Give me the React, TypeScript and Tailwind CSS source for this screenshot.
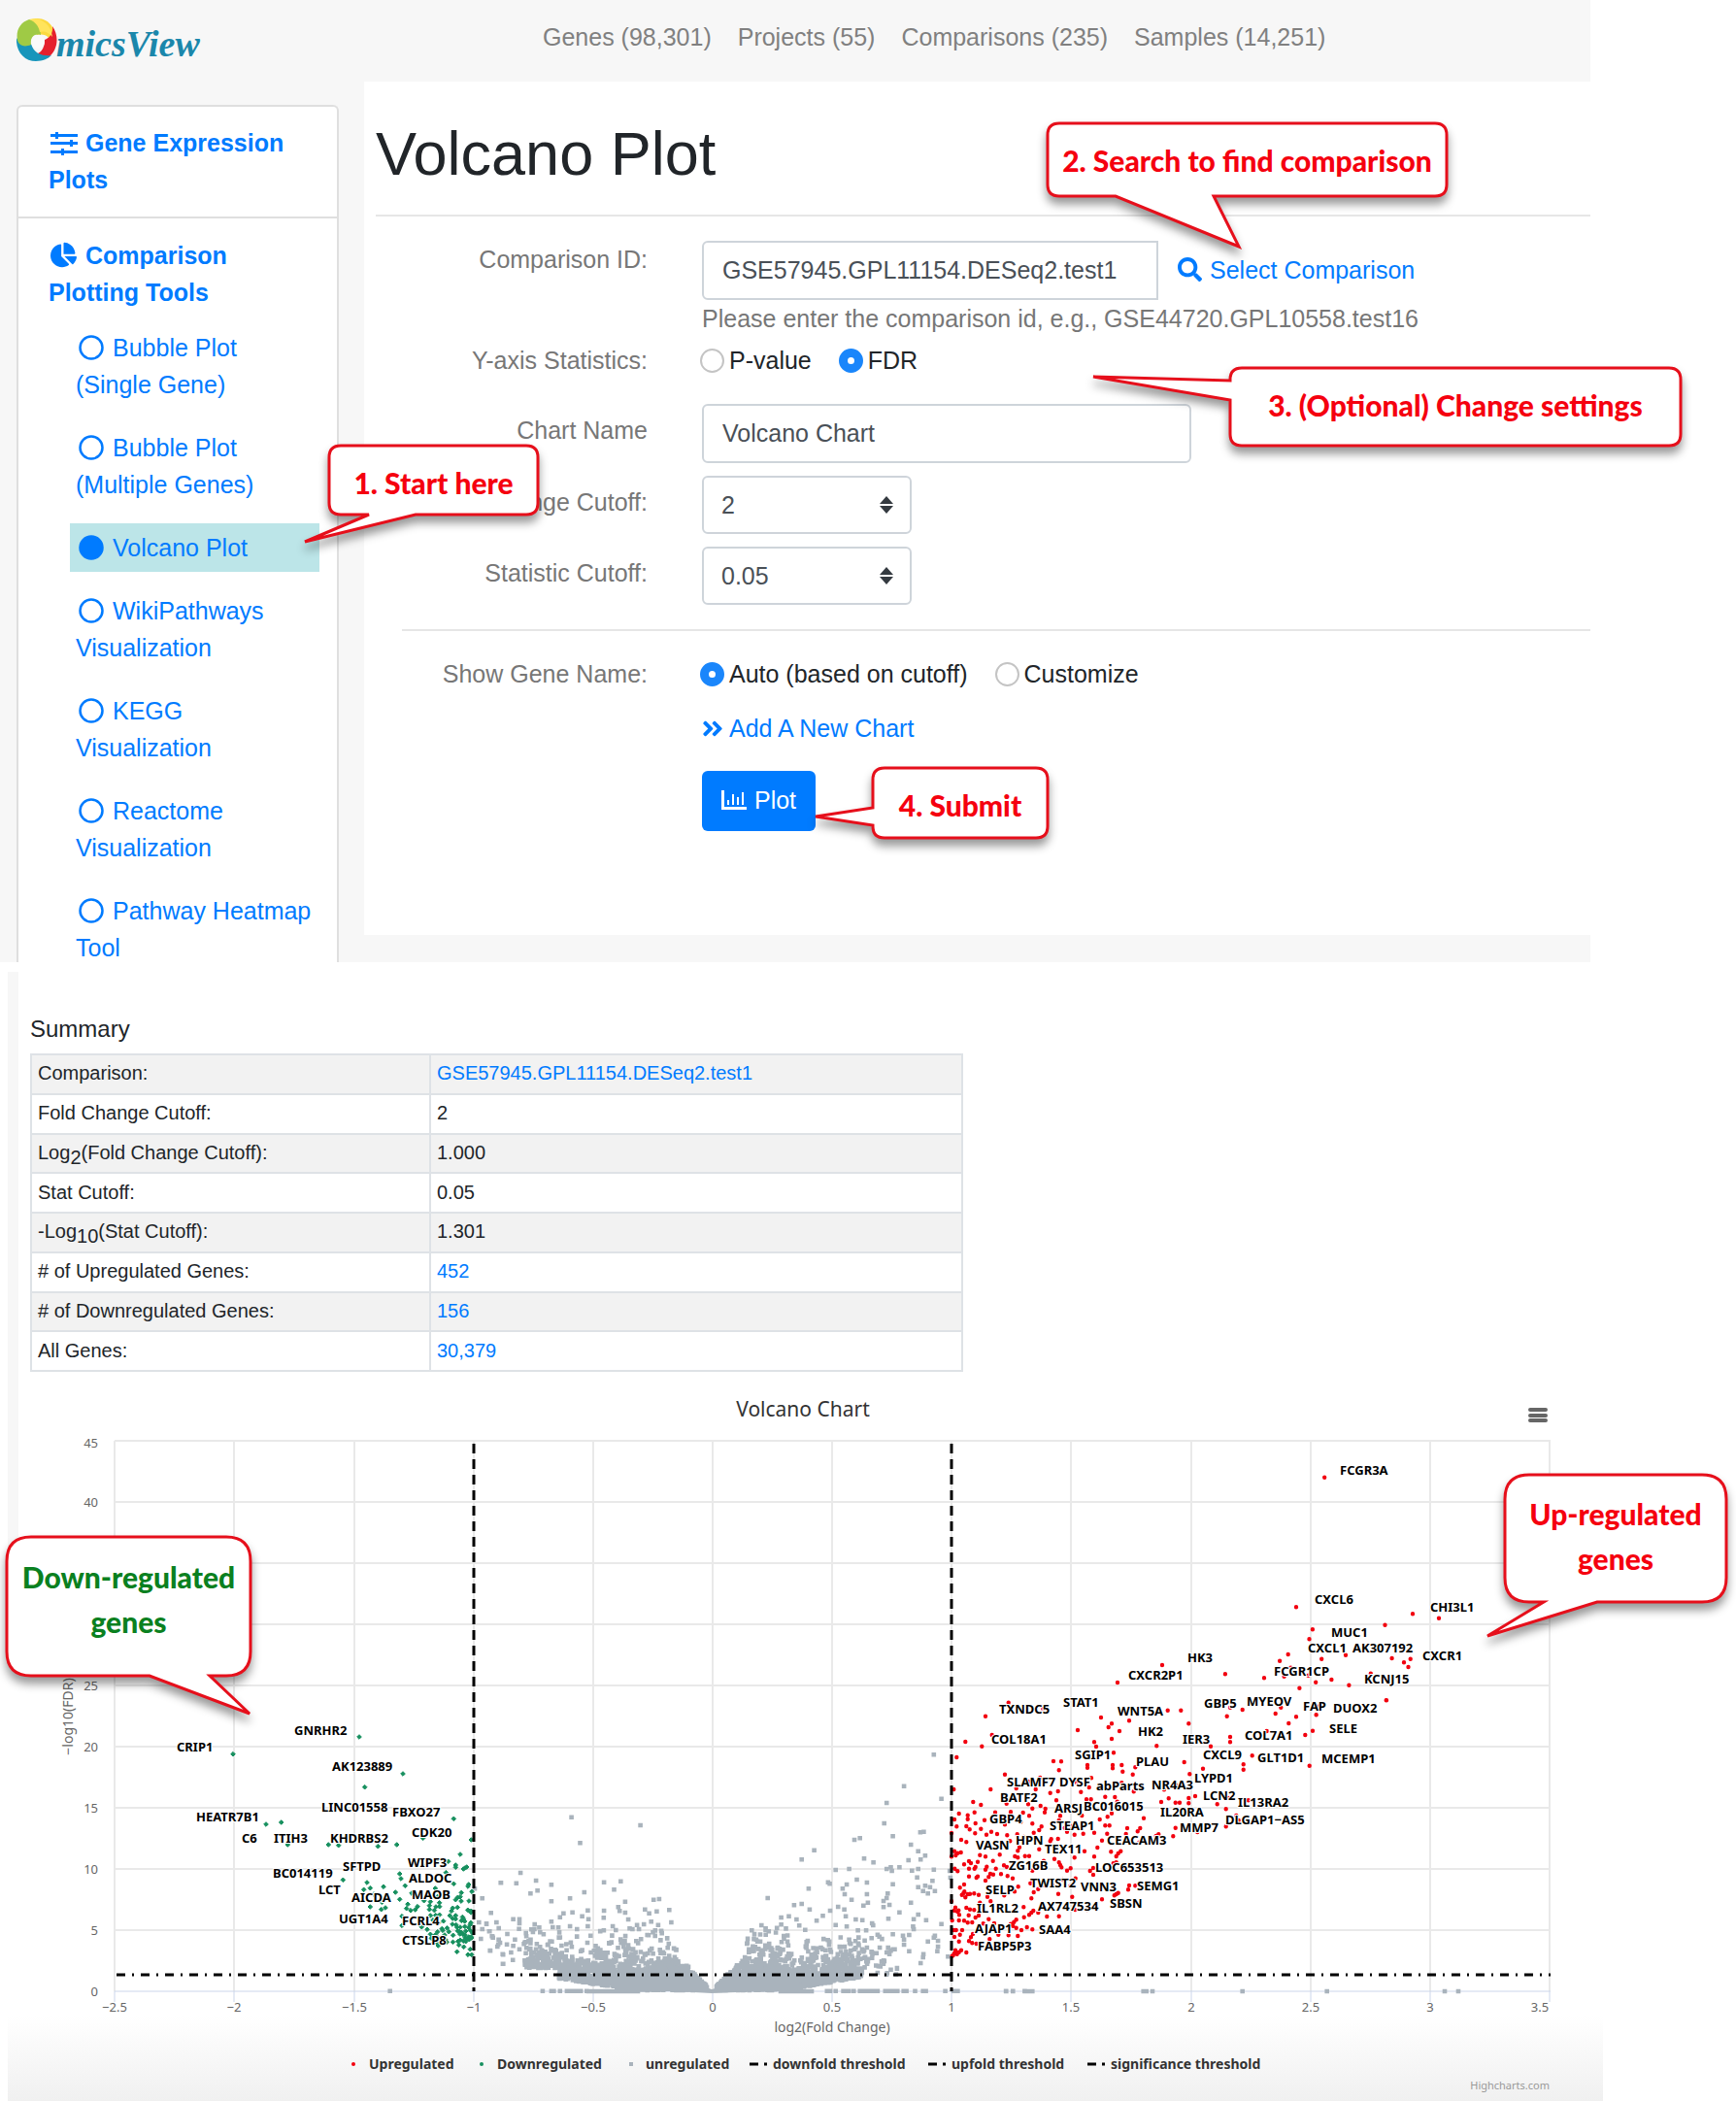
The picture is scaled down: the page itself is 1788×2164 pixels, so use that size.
import React from "react";
import { FaChartPie, FaSearch, FaAngleDoubleRight } from "react-icons/fa";

/* ------------------------------------------------------------------ */
/* Shared bits                                                         */
/* ------------------------------------------------------------------ */

function Logo() {
  return (
    <a href="#home" aria-label="OmicsView" className="flex h-11 items-end text-[#1b87ab]">
      <svg viewBox="0 0 42 44" className="h-11 w-[42px]" aria-hidden="true">
        <path d="M7 7C14 -2 30 -3 37 9C40 14 41 18 41 22L36 28C36 20 30 15 21 17C20 9 14 6 7 7Z" fill="#fbd940" />
        <path d="M37 8C44 18 43 32 33 40C28 43 20 42 15 37C24 38 29 32 29 22C34 20 38 15 37 8Z" fill="#e5202d" />
        <path d="M0 20C-1 34 8 44 20 44C27 44 33 41 36 38C28 39 18 37 15 26C8 28 3 26 0 20Z" fill="#1795bb" />
        <path d="M1 23C-1 12 4 4 13 1C20 2 25 8 25 17C18 15 14 20 15 27C8 30 3 28 1 23Z" fill="#9fca45" />
        <path d="M13 1C23 -2 35 4 37 19C32 13 27 13 24 14C23 8 19 3 13 1Z" fill="#ffe45c" />
        <circle cx="22" cy="24" r="7" fill="#fafafa" />
      </svg>
      <span className="-mb-1 -ml-px font-['Liberation_Serif',serif] text-[38px] leading-[44px] font-bold italic">
        micsView
      </span>
    </a>
  );
}

function SlidersIcon() {
  return (
    <svg viewBox="0 0 28 24" className="h-6 w-7" fill="#007bff" aria-hidden="true">
      <path d="M0 2h28v3H0zM0 10h28v3H0zM0 19h28v3H0z" />
      <path d="M5 0h3v7H5zM20 8h3v7h-3zM11 17h3v7h-3z" />
    </svg>
  );
}

function CircleIcon({ filled }: { filled?: boolean }) {
  return (
    <svg viewBox="0 0 26 26" className="h-[26px] w-[26px]" aria-hidden="true">
      <circle cx="13" cy="13" r="11.5" fill={filled ? "#007bff" : "none"} stroke="#007bff" strokeWidth="2.5" />
    </svg>
  );
}

function BarsIcon() {
  return (
    <svg viewBox="0 0 26 20" className="h-5 w-[26px]" fill="#fff" aria-hidden="true">
      <path d="M0 0h3v17h23v3H0z" />
      <path d="M6 10h2v5H6zM11 4h2v11h-2zM16 7h2v8h-2zM21 2h2v13h-2z" />
    </svg>
  );
}

function IconSlot({ children }: { children: React.ReactNode }) {
  return (
    <span className="mr-[7px] inline-flex h-[26px] w-[31px] items-center justify-center align-[-4px]">{children}</span>
  );
}

/* ------------------------------------------------------------------ */
/* Sidebar                                                             */
/* ------------------------------------------------------------------ */

const tools: { lines: string[]; active?: boolean }[] = [
  { lines: ["Bubble Plot", "(Single Gene)"] },
  { lines: ["Bubble Plot", "(Multiple Genes)"] },
  { lines: ["Volcano Plot"], active: true },
  { lines: ["WikiPathways", "Visualization"] },
  { lines: ["KEGG", "Visualization"] },
  { lines: ["Reactome", "Visualization"] },
  { lines: ["Pathway Heatmap", "Tool"] },
];

function Sidebar() {
  return (
    <aside className="mt-6 ml-[17px] w-[332px] shrink-0 overflow-hidden rounded-t-md border-2 border-b-0 border-[#dfdfdf] bg-white text-[#007bff]">
      <a href="#expression" className="block border-b-2 border-[#dfdfdf] pt-[18px] pr-4 pb-[19px] pl-[31px] leading-[38px] font-bold">
        <IconSlot>
          <SlidersIcon />
        </IconSlot>
        Gene Expression
        <br />
        Plots
      </a>
      <div className="pt-[19px]">
        <a href="#comparison" className="block pr-4 pl-[31px] leading-[38px] font-bold">
          <IconSlot>
            <FaChartPie className="h-[27px] w-[27px]" />
          </IconSlot>
          Comparison
          <br />
          Plotting Tools
        </a>
        <ul className="mt-[13px] mr-[18px] -mb-2.5 ml-[53px] flex flex-col gap-[15px]">
          {tools.map((tool) => (
            <li key={tool.lines.join(" ")}>
              <a
                href="#tool"
                className={
                  tool.active
                    ? "block bg-[#bce5e8] px-1.5 py-1.5 leading-[38px] whitespace-nowrap"
                    : "block px-1.5 py-1.5 leading-[38px] whitespace-nowrap"
                }
              >
                <IconSlot>
                  <CircleIcon filled={tool.active} />
                </IconSlot>
                {tool.lines[0]}
                {tool.lines[1] && (
                  <>
                    <br />
                    {tool.lines[1]}
                  </>
                )}
              </a>
            </li>
          ))}
        </ul>
      </div>
    </aside>
  );
}

/* ------------------------------------------------------------------ */
/* Form                                                                */
/* ------------------------------------------------------------------ */

const rowClass = "grid grid-cols-[292px_1fr] gap-x-14 leading-[38px]";
const inputClass = "block h-[61px] border-2 border-[#ced4da] bg-white px-[19px] text-[#495057]";
const radioClass =
  "h-[25px] w-[25px] shrink-0 appearance-none rounded-full border-2 border-[#c4c4c4] bg-white checked:border-[9px] checked:border-[#1a86fb]";

function Radio({ name, label, checked }: { name: string; label: string; checked?: boolean }) {
  return (
    <label className="flex items-center gap-[5px] text-[#212529]">
      <input type="radio" name={name} defaultChecked={checked} className={radioClass} />
      {label}
    </label>
  );
}

function Select({ id, value }: { id: string; value: string }) {
  return (
    <div className="relative w-[216px]">
      <select
        id={id}
        defaultValue={value}
        className="block h-[60px] w-full appearance-none rounded-md border-2 border-[#ced4da] bg-white px-[18px] text-[#495057]"
      >
        <option value={value}>{value}</option>
      </select>
      <svg
        viewBox="0 0 14 18"
        className="pointer-events-none absolute top-[21px] right-[19px] h-[18px] w-3.5"
        fill="#343a40"
        aria-hidden="true"
      >
        <path d="M7 0l7 8H0zM7 18l7-8H0z" />
      </svg>
    </div>
  );
}

function VolcanoForm() {
  return (
    <main className="flex min-w-0 flex-1 flex-col pb-7">
      <form className="flex-1 bg-white text-[#777]" onSubmit={(e) => e.preventDefault()}>
        <h1 className="ml-3 border-b-2 border-[#e6e6e6] pt-9 pb-[25px] text-[63px] leading-[76px] text-[#212529]">
          Volcano Plot
        </h1>
        <div className={`${rowClass} mt-[25px]`}>
          <label htmlFor="cmp" className="text-right">
            Comparison ID:
          </label>
          <div>
            <div className="flex items-center">
              <input
                id="cmp"
                defaultValue="GSE57945.GPL11154.DESeq2.test1"
                className={`${inputClass} w-[470px] rounded-l-md`}
              />
              <a href="#select" className="ml-5 flex items-center gap-2 pb-0.5 text-[#007bff]">
                <FaSearch className="h-[25px] w-[25px]" />
                Select Comparison
              </a>
            </div>
            <p>Please enter the comparison id, e.g., GSE44720.GPL10558.test16</p>
          </div>
        </div>
        <fieldset className={`${rowClass} mt-[5px]`}>
          <span className="text-right">Y-axis Statistics:</span>
          <div className="-ml-0.5 flex gap-7">
            <Radio name="stat" label="P-value" />
            <Radio name="stat" label="FDR" checked />
          </div>
        </fieldset>
        <div className={`${rowClass} mt-[26px]`}>
          <label htmlFor="chart" className="pt-2 text-right">
            Chart Name
          </label>
          <input id="chart" defaultValue="Volcano Chart" className={`${inputClass} w-[504px] rounded-md`} />
        </div>
        <div className={`${rowClass} mt-[13px]`}>
          <label htmlFor="fold" className="pt-2 text-right">
            Fold Change Cutoff:
          </label>
          <Select id="fold" value="2" />
        </div>
        <div className={`${rowClass} mt-[13px]`}>
          <label htmlFor="statcut" className="pt-2 text-right">
            Statistic Cutoff:
          </label>
          <Select id="statcut" value="0.05" />
        </div>
        <hr className="mt-[25px] ml-[39px] border-t-2 border-[#e6e6e6]" />
        <fieldset className={`${rowClass} mt-[25px]`}>
          <span className="text-right">Show Gene Name:</span>
          <div className="-ml-0.5 flex gap-7">
            <Radio name="gene" label="Auto (based on cutoff)" checked />
            <Radio name="gene" label="Customize" />
          </div>
        </fieldset>
        <div className={`${rowClass} mt-[18px]`}>
          <a href="#add" className="col-start-2 flex items-center gap-1.5 text-[#007bff]">
            <FaAngleDoubleRight className="h-[25px] w-[22px]" />
            Add A New Chart
          </a>
        </div>
        <div className={`${rowClass} mt-[25px]`}>
          <button
            type="submit"
            className="col-start-2 flex h-[62px] w-[117px] items-center justify-center gap-2 rounded-md bg-[#007bff] pb-0.5 text-white"
          >
            <BarsIcon />
            Plot
          </button>
        </div>
      </form>
    </main>
  );
}

/* ------------------------------------------------------------------ */
/* Summary table                                                       */
/* ------------------------------------------------------------------ */

const summary: { label: React.ReactNode; value: string; link?: boolean }[] = [
  { label: "Comparison:", value: "GSE57945.GPL11154.DESeq2.test1", link: true },
  { label: "Fold Change Cutoff:", value: "2" },
  { label: <>Log<sub className="text-[20px]">2</sub>(Fold Change Cutoff):</>, value: "1.000" },
  { label: "Stat Cutoff:", value: "0.05" },
  { label: <>-Log<sub className="text-[20px]">10</sub>(Stat Cutoff):</>, value: "1.301" },
  { label: "# of Upregulated Genes:", value: "452", link: true },
  { label: "# of Downregulated Genes:", value: "156", link: true },
  { label: "All Genes:", value: "30,379", link: true },
];

function Summary() {
  return (
    <div className="border-l-[11px] border-[#f7f7f7] pt-[41px] pb-[13px] pl-3">
      <h2 className="mb-[7px] text-[24px] leading-9 text-[#212529]">Summary</h2>
      <table className="h-[328px] w-[961px] border-collapse text-[20px] leading-[26px] text-[#212529]">
        <tbody>
          {summary.map((row, i) => (
            <tr key={i} className="odd:bg-[#f2f2f2]">
              <th scope="row" className="w-[411px] border-2 border-[#dee2e6] px-1.5 pb-0.5 text-left font-normal">
                {row.label}
              </th>
              <td className="border-2 border-[#dee2e6] px-1.5 pb-0.5">
                {row.link ? (
                  <a href="#genes" className="text-[#007bff]">
                    {row.value}
                  </a>
                ) : (
                  row.value
                )}
              </td>
            </tr>
          ))}
        </tbody>
      </table>
    </div>
  );
}

/* ------------------------------------------------------------------ */
/* Volcano chart                                                       */
/* ------------------------------------------------------------------ */

const X0 = 734;
const Y0 = 2050;
const px = (v: number) => Math.round(X0 + v * 246.3);
const py = (v: number) => Math.round(Y0 - v * 12.594);

function seeded(seed: number) {
  let s = seed;
  return () => {
    s = (s * 1664525 + 1013904223) % 4294967296;
    return s / 4294967296;
  };
}

type Pt = [number, number];

function unpack(flat: number[], ox: number, oy: number, sx: number, sy: number): Pt[] {
  const out: Pt[] = [];
  for (let i = 0; i < flat.length; i += 2) out.push([ox + flat[i] / sx, oy + flat[i + 1] / sy]);
  return out;
}

const downPoints: Pt[] = [
  ...unpack(
    [
      1110, 24, 720, 77, 1245, 138, 1127, 179, 822, 294, 869, 288, 1402, 277, 889, 357, 1015, 357, 1046, 359, 1168, 362,
      1226, 357, 1456, 342, 1422, 387, 1385, 409, 1408, 420, 1408, 427, 1442, 426, 1432, 432, 1437, 429, 1235, 447, 1239,
      462, 1252, 484, 1060, 466, 1134, 474, 1144, 491, 1124, 496, 1185, 487, 1222, 504, 1155, 510, 1235, 526, 1144, 549,
      1191, 552, 1178, 557, 1378, 443, 1402, 478, 1448, 480, 1446, 486, 1458, 502, 1422, 518, 1408, 527, 1449, 531, 1260,
      541, 1256, 554, 1269, 560, 1290, 548, 1283, 558, 1310, 530, 1330, 533, 1327, 545, 1327, 557, 1347, 549, 1358, 548,
      1346, 575, 1358, 574, 1330, 576, 1399, 553, 1395, 562, 1456, 562, 1408, 576, 1432, 586, 1426, 592, 1398, 603, 1370,
      593, 1242, 578, 1242, 607, 1303, 611, 1320, 619, 1330, 634, 1368, 622, 1387, 626, 1400, 637, 1412, 612, 1422, 612,
      1436, 610, 1453, 604, 1448, 613, 1420, 626, 1421, 633, 1439, 624, 1453, 622, 1437, 636, 1437, 645, 1432, 655, 1439,
      656, 1450, 650, 1457, 645, 1418, 667, 1433, 673, 1453, 680, 1446, 697, 1457, 697, 1412, 688, 1354, 669, 1340, 640,
      1352, 626, 1374, 636, 1345, 492, 1340, 660, 1460, 630, 1376, 650, 1180, 535, 1272, 507, 1306, 421, 1374, 418, 1350,
      410, 1307, 337, 1354, 645, 1338, 590, 1350, 600,
    ],
    0, 1780, 3, 3,
  ),
  ...(() => {
    const r = seeded(11);
    return Array.from({ length: 36 }, (): Pt => [486 - Math.pow(r(), 1.2) * 50, 2000 - Math.pow(r(), 1.4) * 52]);
  })(),
];

const upPoints: Pt[] = [
  ...unpack(
    [
      438, 302, 360, 703, 680, 724, 752, 737, 604, 758, 405, 772, 396, 802, 338, 849, 315, 869, 430, 863, 496, 851, 623,
      861, 656, 874, 674, 863, 668, 888, 565, 908, 272, 922, 345, 890, 327, 917, 393, 914, 414, 935, 457, 927, 505, 944,
      369, 953, 165, 910, 608, 991, 422, 1012, 415, 1036,
    ],
    1200, 1420, 2.667, 3,
  ),
  [1197, 1714], [1151, 1732],
  ...unpack(
    [
      236, 38, 165, 80, 103, 159, 185, 138, 154, 173, 76, 207, 343, 57, 522, 84, 450, 123, 555, 103, 545, 114, 609, 94,
      579, 126, 555, 150, 501, 160, 507, 174, 561, 193, 728, 62, 769, 62, 793, 103, 694, 172, 779, 222, 911, 80, 921, 53,
      959, 60, 1078, 53, 1061, 72, 1125, 82, 1102, 102, 1034, 126, 1153, 138, 1176, 125, 1187, 76, 1193, 50, 921, 144,
      921, 160, 861, 173, 989, 202, 1166, 233, 962, 229, 962, 245, 837, 242, 796, 259, 375, 219, 399, 220, 392, 247, 480,
      231, 480, 239, 558, 231, 558, 241, 586, 231, 589, 251, 628, 238, 620, 260, 225, 260, 67, 306, 181, 306, 260, 303,
      320, 306, 334, 270, 298, 282, 375, 274, 446, 284, 492, 271, 485, 300, 586, 286, 623, 313, 717, 307, 752, 292, 365,
      317, 389, 312, 460, 314, 384, 340, 477, 337, 491, 337, 535, 329, 565, 330, 572, 344, 731, 334, 708, 345, 752, 347,
      765, 347, 793, 333, 793, 349, 813, 327, 881, 352, 908, 367, 940, 387, 947, 402, 908, 421, 820, 438, 977, 340, 915,
      333, 127, 345, 151, 354, 230, 350, 297, 352, 310, 365, 335, 357, 350, 366, 348, 377, 642, 366, 654, 395, 752, 425,
      745, 451, 643, 426, 635, 436, 603, 426, 599, 444, 700, 445, 692, 450, 640, 470, 555, 380, 542, 391, 518, 399, 535,
      418, 548, 418, 541, 443, 501, 440, 525, 464, 511, 486, 467, 443, 440, 446, 463, 387, 396, 388, 392, 402, 410, 425,
      417, 437, 431, 420, 365, 466, 368, 460, 389, 459, 338, 421, 331, 432, 314, 440, 310, 412, 300, 388, 281, 378, 243,
      376, 195, 377, 162, 401, 131, 377, 110, 386, 83, 381, 69, 399, 76, 421, 110, 398, 134, 411, 106, 420, 116, 430,
      133, 442, 151, 428, 168, 446, 183, 437, 225, 415, 274, 407, 201, 444, 232, 448, 241, 466, 263, 445, 283, 453, 60,
      441, 90, 462, 106, 469, 331, 491, 270, 485, 265, 496, 471, 497, 501, 514, 440, 517, 553, 499, 583, 497, 575, 504,
      569, 513, 569, 532, 560, 535, 655, 540, 596, 555, 498, 549, 488, 558, 498, 570, 378, 521, 345, 527, 392, 532, 400,
      547, 417, 557, 428, 550, 396, 540, 300, 512, 287, 512, 256, 513, 265, 517, 148, 509, 165, 514, 209, 508, 188, 527,
      141, 530, 120, 534, 131, 551, 134, 546, 114, 528, 99, 538, 114, 551, 70, 551, 79, 559, 69, 497, 79, 503, 89, 501,
      73, 510, 60, 514, 169, 545, 165, 554, 197, 551, 222, 541, 231, 546, 180, 567, 175, 577, 189, 569, 213, 568, 233,
      574, 249, 581, 165, 588, 141, 575, 114, 575, 137, 579, 99, 600, 86, 610, 310, 557, 310, 589, 304, 596, 328, 614,
      314, 624, 307, 643, 266, 607, 255, 622, 443, 581, 427, 605, 403, 585, 373, 602, 349, 603, 390, 629, 433, 638, 609,
      603, 606, 616, 628, 604, 575, 626, 563, 634, 569, 630, 560, 603, 525, 646, 442, 678, 479, 678, 392, 698, 355, 699,
      328, 687, 313, 681, 307, 687, 300, 694, 284, 701, 283, 670, 260, 709, 293, 732, 310, 739, 276, 741, 265, 759, 236,
      757, 205, 755, 178, 769, 130, 628, 144, 632, 117, 629, 100, 622, 92, 632, 103, 640, 110, 630, 97, 627, 60, 652,
      148, 656, 181, 652, 171, 638, 223, 634, 106, 672, 117, 677, 82, 680, 72, 671, 79, 684, 84, 694, 68, 680, 113, 695,
      130, 679, 144, 696, 134, 702, 62, 711, 83, 711, 99, 712, 110, 718, 124, 717, 175, 707, 158, 721, 192, 720, 243,
      722, 250, 728, 260, 734, 253, 716, 67, 741, 74, 741, 93, 741, 86, 755, 69, 762, 83, 776, 126, 753, 120, 763, 114,
      775, 124, 781, 137, 783, 72, 803, 90, 803, 106, 810, 83, 809, 77, 815, 65, 819, 62, 821, 69, 812, 81, 810,
      1403, 31, 855, 45,
    ],
    960, 1740, 3, 3,
  ),
];

const grayPoints: Pt[] = [
  ...unpack(
    [
      1548, 475, 1490, 523, 1467, 493, 1517, 568, 1480, 597, 1503, 601, 1534, 597, 1490, 618, 1541, 615, 1486, 648, 1513,
      625, 1520, 640, 1523, 644, 1541, 650, 1545, 660, 1514, 684, 1555, 725, 1205, 809, 1537, 672, 1553, 695,
    ],
    0, 1780, 3, 3,
  ),
  ...unpack(
    [
      248, 272, 447, 297, 273, 352, 101, 444, 44, 475, 89, 476, 146, 468, 190, 481, 150, 499, 130, 508, 342, 473, 390,
      470, 371, 496, 285, 504, 244, 523, 190, 532, 403, 533, 485, 527, 501, 525, 530, 559, 494, 563, 472, 569, 460, 557,
      383, 550, 387, 562, 403, 567, 342, 561, 341, 583, 295, 560, 279, 578, 297, 587, 251, 566, 225, 569, 215, 581, 190,
      595, 16, 568, 3, 602, 32, 597, 80, 587, 98, 587, 98, 600, 142, 603, 141, 618, 194, 612, 244, 609, 264, 618, 295,
      609, 367, 609, 412, 588, 437, 605, 457, 603, 478, 595, 498, 605, 536, 597, 11, 625, 20, 640, 38, 650, 63, 633, 85,
      650, 97, 617, 111, 664, 98, 680, 74, 690, 51, 697, 14, 685, 37, 665, 62, 665, 80, 670, 50, 725, 79, 713, 118, 640,
      137, 627, 155, 613, 1293, 79, 1207, 176, 1157, 228, 1315, 215, 1150, 291, 1264, 317, 1254, 319, 1175, 331, 1080,
      337, 1064, 342, 1227, 357, 1248, 377, 1268, 391, 1255, 403, 1220, 405, 1092, 400, 1119, 412, 948, 374, 912, 403,
      1010, 435, 1049, 432, 1157, 432, 1169, 427, 1172, 438, 1194, 427, 1230, 437, 1248, 432, 1293, 434, 1339, 438, 1341,
      459, 1245, 458, 1289, 469, 1175, 479, 1100, 474, 1071, 465, 1042, 480, 988, 473, 993, 478, 932, 493, 1030, 493,
      1036, 510, 814, 522, 1100, 510, 1160, 508, 1157, 522, 1148, 531, 1148, 550, 1165, 543, 1056, 527, 1103, 536, 1090,
      545, 1227, 536, 1248, 488, 1268, 484, 1282, 488, 1262, 500, 1276, 508, 1296, 500, 890, 544, 912, 540, 935, 557,
      994, 561, 1017, 549, 1035, 557, 1039, 578, 973, 577, 875, 578, 853, 582, 897, 588, 955, 592, 905, 607, 922, 620,
      853, 604, 796, 606, 817, 625, 1010, 605, 1042, 610, 1068, 588, 1087, 590, 1162, 586, 1194, 566, 1248, 573, 1235,
      587, 1271, 590, 1115, 600, 1118, 606, 1315, 602, 1233, 610, 1235, 618, 1098, 622, 1074, 622, 1175, 634, 1204, 638,
      1222, 636, 1296, 638, 1293, 644, 1305, 654, 1276, 656, 1305, 672, 1303, 686, 1263, 695, 1262, 705, 1255, 723, 1334,
      703, 1222, 686, 1175, 680, 1169, 685, 1157, 690, 1115, 690, 1131, 635, 1136, 641, 1100, 675, 1137, 675, 1207, 666,
      1115, 707, 1148, 720, 1187, 740, 1169, 743, 1187, 738, 1131, 753, 1068, 718, 1074, 722, 1067, 655, 1068, 676, 1095,
      704, 1207, 650, 754, 663, 781, 650, 760, 680,
      165, 809, 190, 809, 197, 809, 215, 809, 235, 809, 244, 809, 252, 809, 262, 809, 275, 809, 292, 809, 985, 809, 994,
      809, 1010, 809, 1032, 809, 1036, 809, 1048, 809, 1062, 809, 1080, 809, 1086, 809, 1098, 809, 1110, 809, 1118, 809,
      1131, 809, 1153, 809, 1162, 809, 1172, 809, 1182, 809, 1188, 809, 1206, 809, 1214, 809, 1239, 809, 1262, 809, 1270,
      809, 1326, 809, 1350, 809, 1362, 809, 1501, 809, 1521, 809, 1555, 809,
    ],
    500, 1780, 2.8, 3,
  ),
  ...unpack([229, 930, 250, 930, 287, 930, 298, 930, 310, 930, 653, 930, 662, 930, 681, 930, 959, 930, 1220, 930], 960, 1740, 3, 3),
  [1488, 2050],
  [1502, 2050],
  ...(() => {
    const r = seeded(7);
    const out: Pt[] = [];
    for (let i = 0; i < 3400; i++) {
      const left = i % 2 === 0;
      const d = 5 + Math.pow(r(), left ? 1.25 : 1.6) * (left ? 188 : 150);
      const floor = Math.max(1, left ? (d - 75) * 0.16 : (d - 72) * 0.18);
      const ceil = d < 36 ? d * 1.05 : 66;
      const spread = left ? (d < 120 ? 17 : 11) : d < 80 ? 16 : 9;
      const h = floor + -Math.log(1 - r()) * spread;
      if (h > ceil) continue;
      if (left && d > 158 && h < 24) continue;
      out.push([733 + (left ? -d : d), 2050 - h]);
    }
    for (let i = 0; i < 70; i++) out.push([733 + 80 + r() * 110, 2034 - r() * 40]);
    for (let x = 606; x < 660; x += 3) out.push([x, 2050]);
    for (let x = 804; x < 838; x += 4) out.push([x, 2050]);
    return out;
  })(),
];

const square = ([x, y]: Pt) => `M${(x - 2.3).toFixed(1)} ${(y - 2.3).toFixed(1)}h4.6v4.6h-4.6z`;
const dot = ([x, y]: Pt) => `M${(x - 2.2).toFixed(1)} ${y.toFixed(1)}a2.2 2.2 0 1 0 4.4 0a2.2 2.2 0 1 0 -4.4 0z`;
const diamond = ([x, y]: Pt) => `M${(x - 2.3).toFixed(1)} ${y.toFixed(1)}l2.3 -2.3l2.3 2.3l-2.3 2.3z`;

const grayPath = grayPoints.map(square).join("");
const upPath = upPoints.map(dot).join("");
const downPath = downPoints.map(diamond).join("");

const genes: [string, number, number][] = [
  ["GNRHR2", 303, 1782], ["CRIP1", 182, 1799], ["AK123889", 342, 1819], ["LINC01558", 331, 1861],
  ["FBXO27", 404, 1866], ["HEATR7B1", 202, 1871], ["C6", 249, 1893], ["ITIH3", 282, 1893],
  ["KHDRBS2", 340, 1893], ["CDK20", 424, 1887], ["WIPF3", 420, 1918], ["SFTPD", 353, 1922],
  ["BC014119", 281, 1929], ["ALDOC", 421, 1934], ["LCT", 328, 1946], ["AICDA", 362, 1954],
  ["MAOB", 424, 1951], ["UGT1A4", 349, 1976], ["FCRL4", 414, 1978], ["CTSLP8", 414, 1998],
  ["TXNDC5", 1029, 1760], ["STAT1", 1095, 1753], ["WNT5A", 1151, 1762], ["GBP5", 1240, 1754],
  ["MYEOV", 1284, 1752], ["FAP", 1342, 1757], ["DUOX2", 1373, 1759], ["HK2", 1172, 1783],
  ["COL18A1", 1021, 1791], ["IER3", 1218, 1791], ["COL7A1", 1282, 1787], ["SELE", 1369, 1780],
  ["SGIP1", 1107, 1807], ["PLAU", 1170, 1814], ["CXCL9", 1239, 1807], ["GLT1D1", 1295, 1810],
  ["MCEMP1", 1361, 1811], ["SLAMF7", 1037, 1835], ["DYSF", 1091, 1835], ["abParts", 1129, 1839],
  ["NR4A3", 1186, 1838], ["LYPD1", 1230, 1831], ["BATF2", 1030, 1851], ["LCN2", 1239, 1849],
  ["IL13RA2", 1275, 1856], ["ARSJ", 1086, 1862], ["BC016015", 1116, 1860], ["IL20RA", 1195, 1866],
  ["GBP4", 1019, 1873], ["DLGAP1−AS5", 1262, 1874], ["STEAP1", 1081, 1880], ["MMP7", 1215, 1882],
  ["VASN", 1005, 1900], ["HPN", 1046, 1895], ["CEACAM3", 1140, 1895], ["TEX11", 1076, 1904],
  ["ZG16B", 1039, 1921], ["LOC653513", 1128, 1923], ["TWIST2", 1061, 1939], ["VNN3", 1113, 1943],
  ["SEMG1", 1171, 1942], ["SELP", 1015, 1946], ["SBSN", 1143, 1960], ["IL1RL2", 1006, 1965],
  ["AX747534", 1069, 1963], ["AJAP1", 1004, 1986], ["SAA4", 1070, 1987], ["FABP5P3", 1007, 2004],
  ["FCGR3A", 1380, 1514], ["CXCL6", 1354, 1647], ["CHI3L1", 1473, 1655], ["MUC1", 1371, 1681],
  ["CXCL1", 1347, 1697], ["AK307192", 1393, 1697], ["CXCR1", 1465, 1705], ["HK3", 1223, 1707],
  ["FCGR1CP", 1312, 1721], ["KCNJ15", 1405, 1729], ["CXCR2P1", 1162, 1725],
];

const xTicks = [-2.5, -2, -1.5, -1, -0.5, 0, 0.5, 1, 1.5, 2, 2.5, 3, 3.5];
const yTicks = [0, 5, 10, 15, 20, 25, 30, 35, 40, 45];
/* The callout on the left lies over the 30 and 35 positions. */
const yLabels = yTicks.filter((t) => t < 30 || t > 35);

function LegendDash({ x }: { x: number }) {
  return <path d={`M${x} 2125h9M${x + 15} 2125h3`} stroke="#000" strokeWidth="3" />;
}

function VolcanoChart() {
  return (
    <svg
      viewBox="8 1425 1643 739"
      role="img"
      aria-label="Volcano Chart"
      className="block w-full bg-linear-to-b from-white from-88% to-[#f0f0f0] font-['Noto_Sans',sans-serif]"
    >
      <rect x="8" y="1425" width="11" height="225" fill="#f7f7f7" />
      <text x="827" y="1458" textAnchor="middle" fontSize="21" fill="#333">
        Volcano Chart
      </text>
      <path d="M1576 1451h16M1576 1457h16M1576 1462h16" stroke="#666" strokeWidth="4" strokeLinecap="round" />
      <g stroke="#e9e9e9" strokeWidth="2">
        {xTicks.map((t) => (
          <path key={t} d={`M${px(t)} 1483V${Y0}`} />
        ))}
        {yTicks.slice(1).map((t) => (
          <path key={t} d={`M118 ${py(t)}H1597`} />
        ))}
      </g>
      <g stroke="#ccd6eb" strokeWidth="1">
        <path d={`M118 ${Y0}H1597`} />
        {xTicks.map((t) => (
          <path key={t} d={`M${px(t)} ${Y0}v11`} />
        ))}
      </g>
      <g fontSize="13" fill="#666">
        {xTicks.map((t) => (
          <text key={t} x={t === 3.5 ? 1586 : px(t)} y="2071" textAnchor="middle">
            {String(t).replace("-", "−")}
          </text>
        ))}
        {yLabels.map((t) => (
          <text key={t} x="101" y={py(t) + (t === 45 ? 7 : 5)} textAnchor="end">
            {t}
          </text>
        ))}
      </g>
      <g fontSize="14" fill="#666" textAnchor="middle">
        <text x="857" y="2092">log2(Fold Change)</text>
        <text transform="translate(75 1767) rotate(-90)">−log10(FDR)</text>
      </g>

      <path
        d="M608 2037L640 2047L733 2052L808 2049L850 2042L884 2034L850 2032L810 2026L780 2022L758 2030L744 2045L733 2048L725 2045L706 2028L690 2018L660 2026L630 2032Z"
        fill="#a9b3bc"
      />
      <path d={grayPath} fill="#a9b3bc" />
      <path d={downPath} fill="#17905f" stroke="#17905f" strokeWidth="1" />
      <path d={upPath} fill="#f2000f" />

      <g stroke="#000" strokeWidth="3">
        <path d={`M${px(-1)} 1486V${Y0}M${px(1)} 1486V${Y0}`} strokeDasharray="10 6" />
        <path d="M120 2033H1597" strokeDasharray="9 7 2 7" />
      </g>

      <g fontSize="13" fontWeight="700" fill="#000" stroke="#fff" strokeWidth="2" paintOrder="stroke">
        {genes.map(([name, x, y]) => (
          <text key={name} x={x} y={y + 4}>
            {name}
          </text>
        ))}
      </g>

      <g fontSize="14" fontWeight="700" fill="#333">
        <circle cx="364" cy="2125" r="2" fill="#f2000f" />
        <text x="380" y="2130">Upregulated</text>
        <circle cx="496" cy="2125" r="2" fill="#17905f" />
        <text x="512" y="2130">Downregulated</text>
        <rect x="648" y="2123" width="4" height="4" fill="#a9b3bc" />
        <text x="665" y="2130">unregulated</text>
        <LegendDash x={772} />
        <text x="796" y="2130">downfold threshold</text>
        <LegendDash x={956} />
        <text x="980" y="2130">upfold threshold</text>
        <LegendDash x={1120} />
        <text x="1144" y="2130">significance threshold</text>
      </g>
      <text x="1596" y="2151" textAnchor="end" fontSize="11" fill="#999">
        Highcharts.com
      </text>
    </svg>
  );
}

/* ------------------------------------------------------------------ */
/* Annotations                                                         */
/* ------------------------------------------------------------------ */

type CalloutProps = { place: string; w: number; h: number; d: string; children: React.ReactNode };

function Callout({ place, w, h, d, children }: CalloutProps) {
  return (
    <div className={`absolute flex items-center justify-center ${place}`}>
      <svg
        viewBox={`0 0 ${w} ${h}`}
        className="absolute inset-0 h-full w-full overflow-visible drop-shadow-[0_7px_5px_rgba(0,0,0,0.4)]"
        aria-hidden="true"
      >
        <path d={d} fill="#fff" stroke="#e60f1b" strokeWidth="3" />
      </svg>
      <p className="relative text-center font-['Lato',sans-serif] text-[30px] leading-[46px] font-black whitespace-nowrap">
        {children}
      </p>
    </div>
  );
}

function Annotations() {
  return (
    <div className="text-[#f5000f]">
      <Callout
        place="left-[339px] top-[459px] h-[71px] w-[215px] pt-1"
        w={215}
        h={71}
        d="M12 0H203Q215 0 215 12V59Q215 71 203 71H89L-25 99L41 71H12Q0 71 0 59V12Q0 0 12 0Z"
      >
        1. Start here
      </Callout>
      <Callout
        place="left-[1079px] top-[127px] h-[75px] w-[411px]"
        w={411}
        h={75}
        d="M12 0H399Q411 0 411 12V63Q411 75 399 75H171L197 127L70 75H12Q0 75 0 63V12Q0 0 12 0Z"
      >
        2. Search to find comparison
      </Callout>
      <Callout
        place="left-[1267px] top-[379px] h-20 w-[464px] pb-1"
        w={464}
        h={80}
        d="M12 0H452Q464 0 464 12V68Q464 80 452 80H12Q0 80 0 68V33L-141 9L0 13V12Q0 0 12 0Z"
      >
        3. (Optional) Change settings
      </Callout>
      <Callout
        place="left-[899px] top-[791px] h-[72px] w-[180px] pt-1"
        w={180}
        h={72}
        d="M12 0H168Q180 0 180 12V60Q180 72 168 72H12Q0 72 0 60V59L-59 50L0 41V12Q0 0 12 0Z"
      >
        4. Submit
      </Callout>
      <Callout
        place="left-[7px] top-[1583px] h-[143px] w-[251px] pb-4 text-[#0a8020]"
        w={251}
        h={143}
        d="M25 0H226Q251 0 251 25V118Q251 143 226 143H209L250 182L147 143H25Q0 143 0 118V25Q0 0 25 0Z"
      >
        Down-regulated
        <br />
        genes
      </Callout>
      <Callout
        place="left-[1550px] top-[1519px] h-[131px] w-[228px] pb-1.5"
        w={228}
        h={131}
        d="M25 0H203Q228 0 228 25V106Q228 131 203 131H95L-18 166L40 131H25Q0 131 0 106V25Q0 0 25 0Z"
      >
        Up-regulated
        <br />
        genes
      </Callout>
    </div>
  );
}

const nav = ["Genes (98,301)", "Projects (55)", "Comparisons (235)", "Samples (14,251)"];

export default function App() {
  return (
    <div className="relative min-w-[1300px] overflow-hidden bg-white font-['Liberation_Sans',Arial,sans-serif] text-[25px]">
      <div className="mr-[150px] bg-[#f7f7f7]">
        <header className="flex h-[84px] items-start pt-[19px] pl-[17px]">
          <div className="w-[542px] shrink-0">
            <Logo />
          </div>
          <nav className="flex gap-[27px] leading-[38px] whitespace-nowrap text-[#808080]">
            {nav.map((item) => (
              <a key={item} href="#nav">
                {item}
              </a>
            ))}
          </nav>
        </header>
        <div className="flex gap-[26px]">
          <Sidebar />
          <VolcanoForm />
        </div>
      </div>
      <section className="mt-2.5 mr-[137px] ml-2">
        <Summary />
        <VolcanoChart />
      </section>
      <Annotations />
    </div>
  );
}
